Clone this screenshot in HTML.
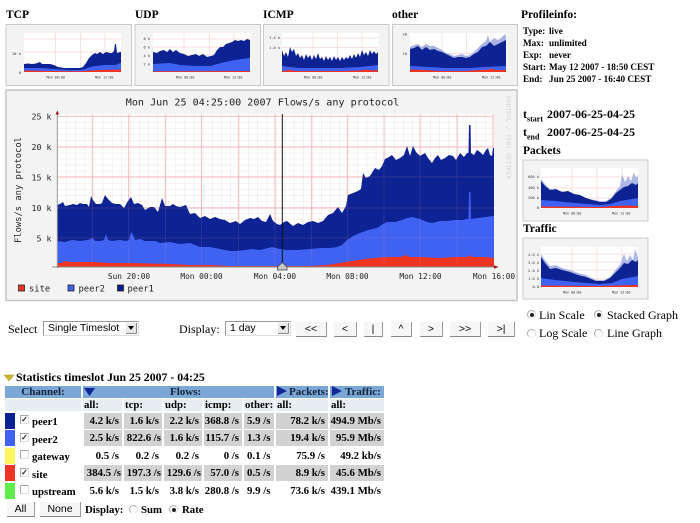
<!DOCTYPE html>
<html><head><meta charset="utf-8"><style>
html,body{margin:0;padding:0;background:#fff}
body{width:700px;height:523px;position:relative;overflow:hidden;font-family:"Liberation Serif",serif;color:#000}
.t{position:absolute;white-space:nowrap;line-height:14px;height:14px}
.b{font-weight:bold}
.h{font-size:11.5px;font-weight:bold}
.i{font-size:9.2px;font-weight:bold}
.c{position:absolute;font-size:10.8px;font-weight:bold;line-height:16px;height:16px;text-align:right;white-space:nowrap;box-sizing:border-box;padding-right:3px}
.g{background:#d2d2d2}
.hd{position:absolute;background:#7ba7d6;height:12px;font-size:11px;font-weight:bold;line-height:12px;color:#13233a;white-space:nowrap}
.sb{position:absolute;background:#e6edf3;height:12px;font-size:10.8px;font-weight:bold;line-height:12px;white-space:nowrap;padding-left:1px;box-sizing:border-box}
.btn{position:absolute;box-sizing:border-box;background:#f6f6f6;border-right:1px solid #999;border-bottom:1px solid #888;font:10.5px "Liberation Sans",sans-serif;text-align:center;line-height:14px;height:15px;white-space:nowrap}
.sel{position:absolute;box-sizing:border-box;height:15px;background:#fff;border:1px solid #999;border-right-color:#ddd;border-bottom-color:#ddd;font:10.5px "Liberation Sans",sans-serif;line-height:13px;padding-left:4px;white-space:nowrap}
.sel i{position:absolute;right:1px;top:1px;width:10px;height:10px;background:#e8e8e8;border-right:1px solid #888;border-bottom:1px solid #888}
.sel i:after{content:"";position:absolute;left:2px;top:3px;border:3px solid transparent;border-top:4px solid #000;border-bottom:0}
.cb{position:absolute;width:7px;height:7px;border:1px solid #aaa;border-right-color:#ddd;border-bottom-color:#ddd;background:#fff;font:bold 8px/7px "Liberation Sans",sans-serif;text-align:center;color:#222}
.rd{position:absolute;width:7px;height:7px;border-radius:50%;border:1px solid #aaa;border-bottom-color:#eee;border-right-color:#ddd;background:#fff}
.rd.on:after{content:"";position:absolute;left:1.5px;top:1.5px;width:4px;height:4px;border-radius:50%;background:#222}
.sw{position:absolute;left:5px;width:10px;height:16px}
</style></head><body>
<svg width="700" height="523" style="position:absolute;left:0;top:0" xmlns="http://www.w3.org/2000/svg">
<defs>
<pattern id="mg" x="57.3" y="116.3" width="9.1" height="6.06" patternUnits="userSpaceOnUse"><path d="M0 0H9.1M0 0V6.06" stroke="#e6dfdf" stroke-width=".8" fill="none"/></pattern>
<filter id="bl" x="-5%" y="-5%" width="110%" height="110%"><feGaussianBlur stdDeviation=".35"/></filter>
</defs>

<!-- main graph -->
<rect x="6" y="90" width="511" height="210.5" fill="#f3f3f3" stroke="#c4c4c4" stroke-width="1.5"/>
<rect x="57.3" y="114" width="436" height="153" fill="#fff"/>
<rect x="57.3" y="114" width="436" height="153" fill="url(#mg)"/>
<path d="M57 116.3H494M57 147H494M57 177H494M57 208H494M57 238H494M92.3 114V267M128.7 114V267M165.3 114V267M201.500 114V267M238.3 114V267M275 114V267M311.7 114V267M347.3 114V267M384 114V267M420 114V267M457 114V267M493 114V267" stroke="#f6bcbc" stroke-width=".9"/>
<g filter="url(#bl)">
<path fill="#0a2193" d="M57 267V205L60 204 63 202 65 206 70 205 73 204 77 205 80 203 83 204 87 204 89 207 91 196 93 200 96 204 100 204 102 203 105 195 108 199 112 203 116 204 120 204 124 208 128 201 131 197 134 204 138 203 142 205 145 210 150 207 154 207 158 212 162 198 165 206 170 206 173 204 176 206 180 207 186 205 190 214 195 213 200 218 205 216 210 219 215 217 220 219 225 220 230 223 236 221 240 224 245 220 250 218 254 219 258 217 262 221 266 222 270 214 273 221 277 224 280 225 284 222 287 221 293 226 298 223 303 225 308 222 313 221 318 223 323 221 328 215 333 213 338 207 342 213 346 206 348 195 353 193 358 191 361 189 363 173 366 178 370 176 375 168 379 170 382 166 385 159 389 157 392 155 396 160 400 158 404 155 407 146 410 156 413 146 416 152 420 156 425 153 428 158 432 163 435 158 438 155 441 160 445 158 449 155 453 156 456 160 460 153 464 157 467 153 468.5 153 469 125 470.5 125 471 153 474 155 477 150 480 152 483 155 486 150 488 148 490 155 492 156 493 148 494 148V267Z"/>
<path fill="#3f62f2" d="M57 267V241L65 242 72 240 80 241 88 240 93 238 95 241 100 241 104 240 106 234 108 240 112 241 120 240 126 241 129 240 131 232 133 235 135 240 140 239 145 241 155 241 160 243 170 242 180 244 190 243 200 247 210 247 220 249 230 251 236 251 245 250 252 249 260 250 268 248 272 247 280 249 287 250 297 250 310 249 320 248 330 248 337 247 342 245 347 240 353 236 360 233 368 230 377 228 383 224 387 222 395 222 402 220 407 218 412 217 420 219 427 222 432 223 440 221 447 221 455 220 462 220 467 219 468.5 219 469 192 470.5 192 471 219 478 218 485 217 493 216 494 216V267Z"/>
<path fill="#ee3424" d="M57 267V263L62 263 64 261 70 262 80 262 95 262 110 263 130 263 150 263.5 170 264 190 265 210 265 230 266 260 266 290 266 310 266 327 265 340 263 352 261 365 259 375 258 387 257 400 257 407 255 409 257 420 257 440 258 455 257 468 257 470 255 472 257 485 257 494 258V267Z"/>
</g>
<path d="M57 147H494M57 177H494M57 208H494M57 238H494M92.3 175V267M128.7 175V267M165.3 175V267M201.500 175V267M238.3 175V267M275 175V267M311.7 175V267M347.3 150V267M384 150V267M420 150V267M457 150V267" stroke="#f08a9a" stroke-width=".7" opacity=".22" fill="none"/>
<path d="M57.3 112V268" stroke="#999" stroke-width="1"/>
<path d="M52 267H495" stroke="#888" stroke-width="1"/>
<path d="M55.5 114.5L57.3 110.5 59.1 114.5Z" fill="#a11"/>
<path d="M494 265.3L498.5 267 494 268.7Z" fill="#a11"/>
<path d="M282.3 114V267" stroke="#111" stroke-width="1"/>
<path d="M282.3 262.5L287 267V270H277.500V267Z" fill="#c8c8c8" stroke="#444" stroke-width=".8"/>

<g font-family="'DejaVu Sans Mono',monospace" fill="#222">
<text x="262.5" y="105.5" font-size="10.1" text-anchor="middle">Mon Jun 25 04:25:00 2007 Flows/s any protocol</text>
<g font-size="8.3" text-anchor="end">
<text x="51.5" y="119.5">25 k</text><text x="51.5" y="150">20 k</text><text x="51.5" y="180.5">15 k</text><text x="51.5" y="211">10 k</text><text x="51.5" y="241.5">5 k</text>
</g>
<text transform="translate(21 243) rotate(-90)" font-size="8.8">Flows/s any protocol</text>
<g font-size="7.8" text-anchor="middle">
<text x="129" y="279">Sun 20:00</text><text x="201.5" y="279">Mon 00:00</text><text x="275" y="279">Mon 04:00</text><text x="347.5" y="279">Mon 08:00</text><text x="420.5" y="279">Mon 12:00</text><text x="494" y="279">Mon 16:00</text>
</g>
<g font-size="8.8">
<text x="29" y="291.5">site</text><text x="78.5" y="291.5">peer2</text><text x="127.5" y="291.5">peer1</text>
</g>
</g>
<rect x="18.5" y="285" width="6" height="6" fill="#ee3424" stroke="#222" stroke-width=".8"/>
<rect x="68" y="285" width="6" height="6" fill="#3f62f2" stroke="#222" stroke-width=".8"/>
<rect x="117.5" y="285" width="6" height="6" fill="#0a2193" stroke="#222" stroke-width=".8"/>
<text transform="translate(506.5 96) rotate(90)" font-family="'DejaVu Sans Mono',monospace" font-size="6.3" fill="#d6d6d6">RRDTOOL / TOBI OETIKER</text>

<!-- thumbnails -->
<g filter="url(#bl)">
<!-- TCP -->
<rect x="6" y="24.5" width="125.5" height="61" fill="#f3f3f3" stroke="#c8c8c8"/>
<rect x="24" y="33" width="97" height="39" fill="#fff"/>
<path d="M24 39H121M24 52H121M55.5 33V72M80.5 33V72M105 33V72" stroke="#f9d5d5" stroke-width=".7"/>
<path fill="#0a2193" d="M24 72V64L28 63.5 32 64 36 63.5 40 62 42 64 46 64 50 64 54 65 58 67 64 68 70 68 76 68 80 68 83 67 86 63 89 58 92 55 95 53 97 54 100 52 103 54 106 52 110 53 112 53 114 51 115 44 116 44 117 53 120 52 121 52V72Z"/>
<path fill="#3f62f2" d="M24 72V68L40 68 55 69 70 70 80 70 85 69 90 67 95 66 105 65 115 65 121 63V72Z"/>
<path fill="#ee3424" d="M24 72V70.5L50 71 80 71.2 90 70.5 100 70 121 69.5V72Z"/>
<text x="46.5" y="78.7" font-size="3.4" font-family="'DejaVu Sans Mono',monospace" fill="#333">Mon 00:00</text>
<text x="95" y="78.7" font-size="3.4" font-family="'DejaVu Sans Mono',monospace" fill="#333">Mon 12:00</text>
<text x="21" y="55" font-size="3.8" text-anchor="end" font-family="'DejaVu Sans Mono',monospace" fill="#333">10 k</text>
<text x="21" y="74" font-size="3.8" text-anchor="end" font-family="'DejaVu Sans Mono',monospace" fill="#333">0</text>
<!-- UDP -->
<rect x="135" y="24.5" width="125.5" height="61" fill="#f3f3f3" stroke="#c8c8c8"/>
<rect x="153" y="33" width="97" height="39" fill="#fff"/>
<path d="M153 39H250M153 47H250M153 55H250M153 64H250M184 33V72M209.5 33V72M234 33V72" stroke="#f9d5d5" stroke-width=".7"/>
<path fill="#0a2193" d="M153 72V52L157 53 160 51 164 50 167 52 170 49 173 52 176 50 180 53 184 54 188 56 192 55 196 54 199 56 203 54 207 57 211 56 214 55 217 50 220 47 223 47 226 44 229 43 232 42 235 40 238 41 241 40 244 41 247 39 250 40V72Z"/>
<path fill="#3f62f2" d="M153 72V64L170 63 180 65 195 66 210 66 217 64 225 62 235 60 250 58V72Z"/>
<path fill="#ee3424" d="M153 72V71.3L250 71V72Z"/>
<text x="176" y="78.7" font-size="3.4" font-family="'DejaVu Sans Mono',monospace" fill="#333">Mon 00:00</text>
<text x="224" y="78.7" font-size="3.4" font-family="'DejaVu Sans Mono',monospace" fill="#333">Mon 12:00</text>
<g font-size="3.6" text-anchor="end" font-family="'DejaVu Sans Mono',monospace" fill="#333"><text x="150" y="40">8 k</text><text x="150" y="48.5">6 k</text><text x="150" y="57">4 k</text><text x="150" y="65.5">2 k</text></g>
<!-- ICMP -->
<rect x="263.5" y="24.5" width="125.5" height="61" fill="#f3f3f3" stroke="#c8c8c8"/>
<rect x="282" y="33" width="96.5" height="39" fill="#fff"/>
<path d="M282 38H378M282 47.5H378M313 33V72M337.5 33V72M362 33V72" stroke="#f9d5d5" stroke-width=".7"/>
<path fill="#0a2193" d="M282 72V50L284 56 286 52 288 57 290 47 292 52 294 49 296 56 298 53 300 58 302 55 304 60 306 54 308 58 310 55 312 60 314 55 316 59 318 53 320 59 322 57 324 61 326 56 328 60 330 57 332 61 334 56 336 60 338 57 340 61 342 57 344 60 346 57 348 59 350 55 352 59 354 54 356 58 358 53 360 57 362 50 364 55 366 52 368 56 370 50 372 54 374 51 376 54 378 52V72Z"/>
<path fill="#3f62f2" d="M282 72V66L290 67 300 68 320 68 340 68 360 67 378 65V72Z"/>
<path fill="#ee3424" d="M282 72V70.5L286 71 288 69.5 291 70.5 300 71 320 71 340 71 360 70.5 368 69.5 372 70.5 378 70V72Z"/>
<text x="304" y="78.7" font-size="3.4" font-family="'DejaVu Sans Mono',monospace" fill="#333">Mon 00:00</text>
<text x="353" y="78.7" font-size="3.4" font-family="'DejaVu Sans Mono',monospace" fill="#333">Mon 12:00</text>
<g font-size="3.6" text-anchor="end" font-family="'DejaVu Sans Mono',monospace" fill="#333"><text x="280" y="39">1.4 k</text><text x="280" y="49">1.0 k</text></g>
<!-- other -->
<rect x="392.5" y="24.5" width="125" height="61" fill="#f3f3f3" stroke="#c8c8c8"/>
<rect x="410" y="33" width="96.5" height="39" fill="#fff"/>
<path d="M410 53.5H506M442 33V72M466.5 33V72M491 33V72" stroke="#f9d5d5" stroke-width=".7"/>
<path fill="#a9b2e0" d="M410 72V47L414 45 418 44 422 47 426 44 430 46 434 46 438 48 442 50 446 53 450 54 454 56 458 55 462 54 466 56 470 55 474 52 478 48 482 44 486 41 488 35 490 42 494 38 498 40 502 37 505 34 506 36V72Z"/>
<path fill="#0a2193" d="M410 72V49L414 48 418 46 422 50 426 47 430 50 434 49 438 51 442 52 446 54 450 56 454 58 458 57 462 57 466 58 470 57 474 54 478 52 482 47 486 46 490 42 494 46 498 44 502 42 506 40V72Z"/>
<path fill="#3f62f2" d="M410 72V66L430 67 445 68 470 68 485 67 506 66V72Z"/>
<path fill="#ee3424" d="M410 72V69.5L425 70 440 71 465 71 480 70 490 69.5 492 68 494 70 506 70V72Z"/>
<text x="433" y="78.7" font-size="3.4" font-family="'DejaVu Sans Mono',monospace" fill="#333">Mon 00:00</text>
<text x="482" y="78.7" font-size="3.4" font-family="'DejaVu Sans Mono',monospace" fill="#333">Mon 12:00</text>
<g font-size="3.6" text-anchor="end" font-family="'DejaVu Sans Mono',monospace" fill="#333"><text x="407" y="35.5">20</text><text x="407" y="55">10</text></g>
<!-- Packets -->
<rect x="523" y="160" width="125" height="61" fill="#f3f3f3" stroke="#c8c8c8"/>
<rect x="541" y="168" width="97" height="40" fill="#fff"/>
<path d="M541 177H638M541 188H638M541 198H638M572 168V208M597 168V208M622 168V208" stroke="#f9d5d5" stroke-width=".7"/>
<path fill="#aeb8e4" d="M541 208V179L545 184 550 189 560 191 570 193 580 196 590 199 600 201 606 201 612 197 616 191 620 186 622 174 625 182 628 176 631 181 634 172 636 178 638 175V208Z"/>
<path fill="#0a2193" d="M541 208V181L545 186 550 190 556 189 562 192 568 191 574 194 580 195 586 198 592 200 600 202 606 202 611 199 616 193 620 190 624 187 628 186 632 183 636 185 638 183V208Z"/>
<path fill="#3f62f2" d="M541 208V200L555 201 575 203 600 205 610 204 620 201 638 198V208Z"/>
<path fill="#ee3424" d="M541 208V206.5L600 207 615 206 625 205.5 638 206V208Z"/>
<text x="563" y="214.7" font-size="3.4" font-family="'DejaVu Sans Mono',monospace" fill="#333">Mon 00:00</text>
<text x="612" y="214.7" font-size="3.4" font-family="'DejaVu Sans Mono',monospace" fill="#333">Mon 12:00</text>
<g font-size="3.6" text-anchor="end" font-family="'DejaVu Sans Mono',monospace" fill="#333"><text x="539" y="178">600 k</text><text x="539" y="189">400 k</text><text x="539" y="199">200 k</text><text x="539" y="209">0</text></g>
<!-- Traffic -->
<rect x="523" y="238" width="125" height="61" fill="#f3f3f3" stroke="#c8c8c8"/>
<rect x="541" y="247" width="97" height="40" fill="#fff"/>
<path d="M541 254H638M541 262H638M541 270H638M541 279H638M572 247V287M597 247V287M622 247V287" stroke="#f9d5d5" stroke-width=".7"/>
<path fill="#aeb8e4" d="M541 287V254L545 260 550 266 556 265 562 268 570 270 578 273 586 275 596 280 604 280 610 277 616 269 620 265 624 254 627 261 630 255 633 260 635 249 638 257V287Z"/>
<path fill="#0a2193" d="M541 287V257L545 263 550 269 556 268 562 270 570 272 578 275 586 277 596 281 604 281 610 278 616 272 620 268 624 263 628 264 632 260 636 262 638 260V287Z"/>
<path fill="#3f62f2" d="M541 287V278L555 280 575 282 600 284 612 283 622 279 638 276V287Z"/>
<path fill="#ee3424" d="M541 287V285.5L600 286 615 285.5 638 285V287Z"/>
<text x="563" y="293.7" font-size="3.4" font-family="'DejaVu Sans Mono',monospace" fill="#333">Mon 00:00</text>
<text x="612" y="293.7" font-size="3.4" font-family="'DejaVu Sans Mono',monospace" fill="#333">Mon 12:00</text>
<g font-size="3.6" text-anchor="end" font-family="'DejaVu Sans Mono',monospace" fill="#333"><text x="539" y="256">4.0 G</text><text x="539" y="264">3.0 G</text><text x="539" y="272">2.0 G</text><text x="539" y="280">1.0 G</text><text x="539" y="288">0.0</text></g>
</g>
<path d="M4 375H14L9 381Z" fill="#cdb52a" stroke="#a89020" stroke-width=".5"/>
</svg>

<div class="t h" style="left:6px;top:8px">TCP</div>
<div class="t h" style="left:135px;top:8px">UDP</div>
<div class="t h" style="left:263px;top:8px">ICMP</div>
<div class="t h" style="left:392px;top:8px">other</div>
<div class="t h" style="left:521px;top:8px">Profileinfo:</div>
<div class="t i" style="left:523px;top:24px">Type:</div><div class="t i" style="left:549px;top:24px">live</div>
<div class="t i" style="left:523px;top:36px">Max:</div><div class="t i" style="left:549px;top:36px">unlimited</div>
<div class="t i" style="left:523px;top:48px">Exp:</div><div class="t i" style="left:549px;top:48px">never</div>
<div class="t i" style="left:523px;top:60px">Start:</div><div class="t i" style="left:549px;top:60px">May 12 2007 - 18:50 CEST</div>
<div class="t i" style="left:523px;top:72px">End:</div><div class="t i" style="left:549px;top:72px">Jun 25 2007 - 16:40 CEST</div>

<div class="t b" style="left:523px;top:107px;font-size:12px">t<sub style="font-size:8px;line-height:0">start</sub></div>
<div class="t b" style="left:547px;top:107px;font-size:12px">2007-06-25-04-25</div>
<div class="t b" style="left:523px;top:125px;font-size:12px">t<sub style="font-size:8px;line-height:0">end</sub></div>
<div class="t b" style="left:547px;top:125px;font-size:12px">2007-06-25-04-25</div>
<div class="t h" style="left:523px;top:144px">Packets</div>
<div class="t h" style="left:523px;top:222px">Traffic</div>

<div class="rd on" style="left:527px;top:310px"></div><div class="t" style="left:539px;top:308px;font-size:12px">Lin Scale</div>
<div class="rd on" style="left:594px;top:310px"></div><div class="t" style="left:607px;top:308px;font-size:12px">Stacked Graph</div>
<div class="rd" style="left:527px;top:329px"></div><div class="t" style="left:539px;top:326px;font-size:12px">Log Scale</div>
<div class="rd" style="left:594px;top:329px"></div><div class="t" style="left:607px;top:326px;font-size:12px">Line Graph</div>

<div class="t" style="left:8px;top:322px;font-size:12px">Select</div>
<div class="sel" style="left:43px;top:321px;width:96px">Single Timeslot<i></i></div>
<div class="t" style="left:179px;top:322px;font-size:12px">Display:</div>
<div class="sel" style="left:225px;top:321px;width:66px">1 day<i></i></div>
<div class="btn" style="left:296px;top:322px;width:31px">&lt;&lt;</div>
<div class="btn" style="left:334px;top:322px;width:23px">&lt;</div>
<div class="btn" style="left:364px;top:322px;width:19px">|</div>
<div class="btn" style="left:391px;top:322px;width:21px">^</div>
<div class="btn" style="left:420px;top:322px;width:23px">&gt;</div>
<div class="btn" style="left:450px;top:322px;width:31px">&gt;&gt;</div>
<div class="btn" style="left:488px;top:322px;width:27px">&gt;|</div>

<div class="t b" style="left:16px;top:370px;font-size:11.8px">Statistics timeslot Jun 25 2007 - 04:25</div>

<div class="hd" style="left:5px;top:386px;width:76px;text-align:center">Channel:</div>
<div class="hd" style="left:83px;top:386px;width:191px;padding-left:87px;box-sizing:border-box">Flows:</div>
<div class="hd" style="left:276px;top:386px;width:52px;padding-left:13px;box-sizing:border-box">Packets:</div>
<div class="hd" style="left:330px;top:386px;width:54px;padding-left:15px;box-sizing:border-box">Traffic:</div>
<svg width="700" height="20" style="position:absolute;left:0;top:380px"><path d="M84 8H95L89.5 16Z" fill="#12279a"/><path d="M277 6V16L287 11Z" fill="#12279a"/><path d="M332 6V16L342 11Z" fill="#12279a"/></svg>

<div class="sb" style="left:5px;top:399px;width:76px"></div>
<div class="sb" style="left:83px;top:399px;width:39px">all:</div>
<div class="sb" style="left:124px;top:399px;width:38px">tcp:</div>
<div class="sb" style="left:164px;top:399px;width:38px">udp:</div>
<div class="sb" style="left:204px;top:399px;width:38px">icmp:</div>
<div class="sb" style="left:244px;top:399px;width:30px">other:</div>
<div class="sb" style="left:276px;top:399px;width:52px">all:</div>
<div class="sb" style="left:330px;top:399px;width:54px">all:</div>

<div class="sw" style="top:413px;background:#0a2193"></div>
<div class="sw" style="top:430px;background:#3f62f2"></div>
<div class="sw" style="top:448px;background:#fdf65a"></div>
<div class="sw" style="top:465px;background:#ee3424"></div>
<div class="sw" style="top:483px;background:#62ec4c"></div>

<div class="cb" style="left:20px;top:415px">✓</div><div class="t b" style="left:32px;top:415px;font-size:10.8px">peer1</div>
<div class="cb" style="left:20px;top:433px">✓</div><div class="t b" style="left:32px;top:433px;font-size:10.8px">peer2</div>
<div class="cb" style="left:20px;top:450px"></div><div class="t b" style="left:32px;top:450px;font-size:10.8px">gateway</div>
<div class="cb" style="left:20px;top:468px">✓</div><div class="t b" style="left:32px;top:468px;font-size:10.8px">site</div>
<div class="cb" style="left:20px;top:485px"></div><div class="t b" style="left:32px;top:485px;font-size:10.8px">upstream</div>

<div class="c g" style="left:84px;top:413px;width:38px">4.2 k/s</div><div class="c g" style="left:124px;top:413px;width:38px">1.6 k/s</div><div class="c g" style="left:164px;top:413px;width:38px">2.2 k/s</div><div class="c g" style="left:204px;top:413px;width:38px">368.8 /s</div><div class="c g" style="left:244px;top:413px;width:30px;text-align:left;padding-left:3px">5.9 /s</div><div class="c g" style="left:276px;top:413px;width:52px">78.2 k/s</div><div class="c g" style="left:330px;top:413px;width:54px">494.9 Mb/s</div>
<div class="c g" style="left:84px;top:430px;width:38px">2.5 k/s</div><div class="c g" style="left:124px;top:430px;width:38px;padding-right:1px">822.6 /s</div><div class="c g" style="left:164px;top:430px;width:38px">1.6 k/s</div><div class="c g" style="left:204px;top:430px;width:38px">115.7 /s</div><div class="c g" style="left:244px;top:430px;width:30px;text-align:left;padding-left:3px">1.3 /s</div><div class="c g" style="left:276px;top:430px;width:52px">19.4 k/s</div><div class="c g" style="left:330px;top:430px;width:54px">95.9 Mb/s</div>
<div class="c" style="left:84px;top:448px;width:38px">0.5 /s</div><div class="c" style="left:124px;top:448px;width:38px">0.2 /s</div><div class="c" style="left:164px;top:448px;width:38px">0.2 /s</div><div class="c" style="left:204px;top:448px;width:38px">0 /s</div><div class="c" style="left:244px;top:448px;width:30px;text-align:left;padding-left:3px">0.1 /s</div><div class="c" style="left:276px;top:448px;width:52px">75.9 /s</div><div class="c" style="left:330px;top:448px;width:54px">49.2 kb/s</div>
<div class="c g" style="left:84px;top:465px;width:38px;padding-right:1px">384.5 /s</div><div class="c g" style="left:124px;top:465px;width:38px;padding-right:1px">197.3 /s</div><div class="c g" style="left:164px;top:465px;width:38px;padding-right:1px">129.6 /s</div><div class="c g" style="left:204px;top:465px;width:38px">57.0 /s</div><div class="c g" style="left:244px;top:465px;width:30px;text-align:left;padding-left:3px">0.5 /s</div><div class="c g" style="left:276px;top:465px;width:52px">8.9 k/s</div><div class="c g" style="left:330px;top:465px;width:54px">45.6 Mb/s</div>
<div class="c" style="left:84px;top:483px;width:38px">5.6 k/s</div><div class="c" style="left:124px;top:483px;width:38px">1.5 k/s</div><div class="c" style="left:164px;top:483px;width:38px">3.8 k/s</div><div class="c" style="left:204px;top:483px;width:38px">280.8 /s</div><div class="c" style="left:244px;top:483px;width:30px;text-align:left;padding-left:3px">9.9 /s</div><div class="c" style="left:276px;top:483px;width:52px">73.6 k/s</div><div class="c" style="left:330px;top:483px;width:54px">439.1 Mb/s</div>

<div class="btn" style="left:7px;top:502px;width:28px">All</div>
<div class="btn" style="left:40px;top:502px;width:41px">None</div>
<div class="t b" style="left:85px;top:503px;font-size:10.8px">Display:</div>
<div class="rd" style="left:129px;top:505px"></div><div class="t b" style="left:141px;top:503px;font-size:10.8px">Sum</div>
<div class="rd on" style="left:169px;top:505px"></div><div class="t b" style="left:182px;top:503px;font-size:10.8px">Rate</div>
</body></html>
